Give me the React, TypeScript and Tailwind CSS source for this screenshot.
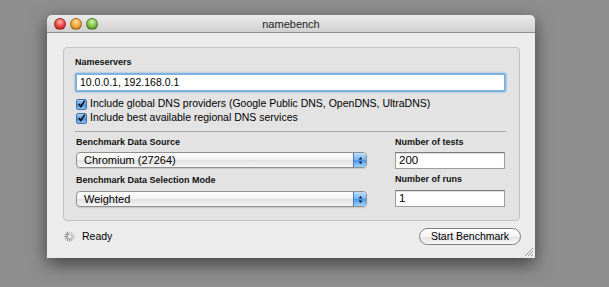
import React from "react";

const font = { fontFamily: '"Liberation Sans", Arial, sans-serif' };

function TrafficLight(props: { color: string }): JSX.Element {
  return <div className={`h-[12px] w-[12px] rounded-full border border-black/30 ${props.color}`} />;
}

function Checkbox(): JSX.Element {
  return (
    <div className="flex h-[11px] w-[11px] shrink-0 items-center justify-center rounded-[2px] border border-[#3f6fa8] bg-[linear-gradient(#a9d0f5,#5a9be0_50%,#3f86d6_51%,#8cc4f5)]">
      <svg width="10" height="10" viewBox="0 0 10 10">
        <path d="M2 5 L4.2 7.8 L8.6 1.2" fill="none" stroke="#111" strokeWidth="1.8" />
      </svg>
    </div>
  );
}

function Popup(props: { label: string }): JSX.Element {
  return (
    <div className="flex h-[16px] w-[291px] items-stretch overflow-hidden rounded-[4px] border border-[#8f8f8f] bg-[linear-gradient(#ffffff,#f1f1f1_50%,#e1e1e1_51%,#f6f6f6)] shadow-[0_1px_1px_rgba(0,0,0,0.12)]">
      <div className="flex-1 pl-[7px] text-[11px] leading-[14px] text-black">{props.label}</div>
      <div className="flex w-[13px] flex-col items-center justify-center border-l border-[#4a7ab5] bg-[linear-gradient(#bfe0fb,#74b3ef_50%,#4a97e6_51%,#9ed3fb)]">
        <svg width="5" height="9" viewBox="0 0 5 9">
          <path d="M2.5 1 L4.5 3.5 L0.5 3.5 Z M2.5 8 L4.5 5.5 L0.5 5.5 Z" fill="#102030" />
        </svg>
      </div>
    </div>
  );
}

function TextField(props: { value: string }): JSX.Element {
  return (
    <div className="h-[17px] w-[110px] border border-[#9c9c9c] border-t-[#7a7a7a] bg-white pl-[3px] text-[11.5px] leading-[15px] text-black shadow-[inset_0_1px_1px_rgba(0,0,0,0.15)]">
      {props.value}
    </div>
  );
}

function Spinner(): JSX.Element {
  const spokes = Array.from({ length: 12 }, (_, i) => i);
  return (
    <svg width="11" height="11" viewBox="-6 -6 12 12">
      {spokes.map((i) => (
        <line
          key={i}
          x1="0"
          y1="-2.5"
          x2="0"
          y2="-5.2"
          stroke="#555"
          strokeWidth="1.1"
          strokeLinecap="round"
          opacity={0.2 + (i / 12) * 0.7}
          transform={`rotate(${i * 30})`}
        />
      ))}
    </svg>
  );
}

const label = "h-[12px] text-[9px] font-bold leading-[12px] text-[#111]";

export default function App(): JSX.Element {
  return (
    <div className="h-[287px] w-[609px] overflow-hidden bg-[#8e8e8e] pl-[47px] pt-[15px]" style={font}>
      <div className="relative flex h-[243px] w-[488px] flex-col overflow-hidden rounded-t-[5px] shadow-[0_6px_18px_rgba(0,0,0,0.55)]">
        {/* title bar */}
        <div className="relative flex h-[18px] items-center border-b border-[#8c8c8c] bg-[linear-gradient(#ebebeb,#d0d0d0)] pl-[7px]">
          <div className="flex gap-[4px]">
            <TrafficLight color="bg-[radial-gradient(circle_at_50%_30%,#ffb3ad,#e8413a_55%,#a8201a)]" />
            <TrafficLight color="bg-[radial-gradient(circle_at_50%_30%,#ffe0a0,#f3a332_55%,#b56a10)]" />
            <TrafficLight color="bg-[radial-gradient(circle_at_50%_30%,#d6f5a8,#79bb45_55%,#3f7e1c)]" />
          </div>
          <div className="absolute inset-x-0 top-0 text-center text-[11px] leading-[18px] text-[#222]">namebench</div>
        </div>

        {/* body */}
        <div className="flex flex-1 flex-col bg-[#ececec] px-[16px] pt-[14px]">
          <div className="flex h-[174px] w-[457px] flex-col rounded-[4px] border border-[#c2c2c2] bg-[#e3e3e3] pl-[11px] pr-[14px] pt-[8px]">
            <div className={label}>Nameservers</div>
            <div className="mt-[5px] h-[19px] w-[431px] rounded-[2px] border-[2px] border-[#7fb2e0] bg-white pl-[3px] text-[10.5px] leading-[15px] text-black shadow-[0_0_2px_#5c9cd8]">
              10.0.0.1, 192.168.0.1
            </div>
            <div className="mt-[5px] flex h-[14px] items-center gap-[3px] pl-[1px] text-[10.5px] text-black">
              <Checkbox />
              <span className="whitespace-nowrap">Include global DNS providers (Google Public DNS, OpenDNS, UltraDNS)</span>
            </div>
            <div className="flex h-[14px] items-center gap-[3px] pl-[1px] text-[10.5px] text-black">
              <Checkbox />
              <span className="whitespace-nowrap">Include best available regional DNS services</span>
            </div>
            <div className="mt-[6px] h-px w-[431px] bg-[#a8a8a8]" />
            <div className="flex">
              <div className="flex w-[320px] flex-col pl-[1px]">
                <div className={`mt-[4px] ${label}`}>Benchmark Data Source</div>
                <div className="mt-[4px]">
                  <Popup label="Chromium (27264)" />
                </div>
                <div className={`mt-[6px] ${label}`}>Benchmark Data Selection Mode</div>
                <div className="mt-[5px]">
                  <Popup label="Weighted" />
                </div>
              </div>
              <div className="flex flex-col">
                <div className={`mt-[4px] ${label}`}>Number of tests</div>
                <div className="mt-[4px]">
                  <TextField value="200" />
                </div>
                <div className={`mt-[4px] ${label}`}>Number of runs</div>
                <div className="mt-[5px]">
                  <TextField value="1" />
                </div>
              </div>
            </div>
          </div>

          {/* status row */}
          <div className="mt-[7px] flex items-center justify-between">
            <div className="flex items-center gap-[7px] pl-[1px]">
              <Spinner />
              <span className="text-[10.5px] text-black">Ready</span>
            </div>
            <div className="-mr-[2px] flex h-[17px] w-[102px] items-center justify-center rounded-full border border-[#7d7d7d] bg-[linear-gradient(#ffffff,#f2f2f2_50%,#e2e2e2_51%,#f8f8f8)] text-[10.5px] text-black">
              Start Benchmark
            </div>
          </div>
        </div>

        {/* resize grip */}
        <svg className="absolute bottom-[1px] right-[1px]" width="11" height="11" viewBox="0 0 11 11">
          <path d="M10 2 L2 10 M10 5 L5 10 M10 8 L8 10" stroke="#9a9a9a" strokeWidth="1" />
        </svg>
      </div>
    </div>
  );
}
